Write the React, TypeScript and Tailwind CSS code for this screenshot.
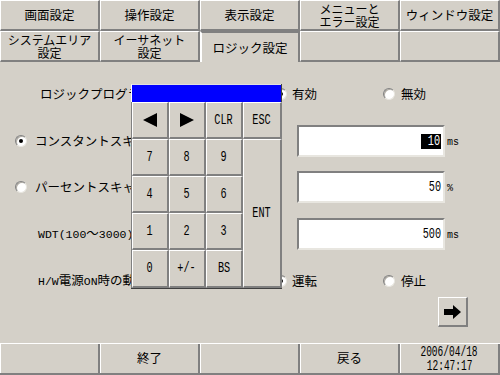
import React from "react";

const JP = "font-['Noto_Sans_CJK_JP',sans-serif]";
const MONO = "font-['Liberation_Mono',monospace]";

function Tab({ children, selected }: { children?: React.ReactNode; selected?: boolean }) {
  return (
    <div
      className={
        "flex items-center justify-center text-center text-[12.5px] leading-[12px] text-black border-l border-l-white border-r-2 border-r-[#808080] " +
        (selected
          ? "border-t-2 border-t-[#808080] border-l-[#808080] border-l-2 bg-[#d4d0c8]"
          : "border-t border-t-white border-b-2 border-b-[#808080]")
      }
    >
      {children}
    </div>
  );
}

function TwoLine({ a, b }: { a: string; b: string }) {
  return (
    <span className="flex flex-col items-center text-[12px]">
      <span className="block h-[13px] leading-[13px]">{a}</span>
      <span className="block h-[13px] leading-[13px]">{b}</span>
    </span>
  );
}

function Radio({ checked }: { checked?: boolean }) {
  return (
    <span className="inline-flex w-[12px] h-[12px] rounded-full bg-white items-center justify-center shrink-0 border border-t-[#808080] border-l-[#808080] border-r-[#e8e6e0] border-b-[#e8e6e0] shadow-[inset_1px_1px_0_#b0aca4]">
      {checked && <span className="w-[4px] h-[4px] rounded-full bg-black" />}
    </span>
  );
}

function Narrow({ children, origin = "origin-center", size = "text-[15px]" }: { children: React.ReactNode; origin?: string; size?: string }) {
  return <span className={`${MONO} ${size} inline-block scale-x-[0.68] ${origin} leading-none`}>{children}</span>;
}

function Key({ children, className = "" }: { children?: React.ReactNode; className?: string }) {
  return (
    <div className={"flex items-center justify-center bg-[#d4d0c8] border-t border-l border-t-white border-l-white border-r-2 border-b-2 border-r-[#808080] border-b-[#808080] " + className}>
      {children}
    </div>
  );
}

function Field({ children }: { children: React.ReactNode }) {
  return (
    <div className="w-[148px] h-[32px] bg-white flex items-center justify-end pr-[2px] border-2 border-t-[#808080] border-l-[#808080] border-r-[#e8e6e0] border-b-[#e8e6e0]">
      {children}
    </div>
  );
}

function Unit({ children }: { children: React.ReactNode }) {
  return <span className={`${MONO} text-[10px] ml-[2px] mt-[2px]`}>{children}</span>;
}

function BottomCell({ children }: { children?: React.ReactNode }) {
  return (
    <div className="flex flex-col items-center justify-center border-l border-l-white border-r-2 border-r-[#808080] text-[12.5px]">
      {children}
    </div>
  );
}

export default function App() {
  return (
    <div className={`${JP} w-[500px] h-[375px] bg-[#d4d0c8] flex flex-col overflow-hidden text-black select-none`}>
      {/* Tabs row 1 */}
      <div className="grid grid-cols-5 h-[31px]">
        <Tab>画面設定</Tab>
        <Tab>操作設定</Tab>
        <Tab>表示設定</Tab>
        <Tab>
          <TwoLine a="メニューと" b="エラー設定" />
        </Tab>
        <Tab>ウィンドウ設定</Tab>
      </div>
      {/* Tabs row 2 */}
      <div className="grid grid-cols-5 h-[31px]">
        <Tab>
          <TwoLine a="システムエリア" b="設定" />
        </Tab>
        <Tab>
          <TwoLine a="イーサネット" b="設定" />
        </Tab>
        <Tab selected>ロジック設定</Tab>
        <Tab />
        <Tab />
      </div>

      {/* Content */}
      <div className="relative flex-1 flex flex-col text-[12.5px]">
        <div className="h-[20px]" />
        {/* Row A */}
        <div className="flex items-center h-[24px]">
          <div className="w-[275px] pl-[40px] whitespace-nowrap overflow-hidden">ロジックプログラム</div>
          <div className="w-[108px] flex items-center gap-[5px]">
            <Radio checked />
            <span>有効</span>
          </div>
          <div className="flex items-center gap-[6px]">
            <Radio />
            <span>無効</span>
          </div>
        </div>
        {/* Row B */}
        <div className="flex items-center h-[32px] mt-[19px]">
          <div className="w-[297px] pl-[15px] flex items-center gap-[8px] whitespace-nowrap overflow-hidden">
            <Radio checked />
            <span>コンスタントスキャン</span>
          </div>
          <Field>
            <span className="bg-black text-white px-[1px] leading-none">
              <Narrow origin="origin-right">10</Narrow>
            </span>
          </Field>
          <Unit>ms</Unit>
        </div>
        {/* Row C */}
        <div className="flex items-center h-[32px] mt-[14px]">
          <div className="w-[297px] pl-[15px] flex items-center gap-[8px] whitespace-nowrap overflow-hidden">
            <Radio />
            <span>パーセントスキャン</span>
          </div>
          <Field>
            <Narrow origin="origin-right">50</Narrow>
          </Field>
          <Unit>%</Unit>
        </div>
        {/* Row D */}
        <div className="flex items-center h-[32px] mt-[15px]">
          <div className="w-[297px] pl-[38px] whitespace-nowrap overflow-hidden">
            <span className={`${MONO} text-[11.5px]`}>WDT(100</span>
            <span>～</span>
            <span className={`${MONO} text-[11.5px]`}>3000)</span>
          </div>
          <Field>
            <Narrow origin="origin-right">500</Narrow>
          </Field>
          <Unit>ms</Unit>
        </div>
        {/* Row E */}
        <div className="flex items-center h-[24px] mt-[19px]">
          <div className="w-[275px] pl-[38px] whitespace-nowrap overflow-hidden">
            <span className={`${MONO} text-[11.5px]`}>H/W</span>
            <span>電源</span>
            <span className={`${MONO} text-[11.5px]`}>ON</span>
            <span>時の動作</span>
          </div>
          <div className="w-[108px] flex items-center gap-[5px]">
            <Radio checked />
            <span>運転</span>
          </div>
          <div className="flex items-center gap-[6px]">
            <Radio />
            <span>停止</span>
          </div>
        </div>
        {/* Row F */}
        <div className="flex h-[30px] mt-[4px] pl-[438px]">
          <div className="w-[30px] h-[30px] flex items-center justify-center border-t border-l border-t-white border-l-white border-r-2 border-b-2 border-r-[#808080] border-b-[#808080]">
            <svg width="18" height="14" viewBox="0 0 18 14">
              <polygon points="0,4 9,4 9,0 17,7 9,14 9,10 0,10" fill="#000" />
            </svg>
          </div>
        </div>

        {/* Keypad overlay */}
        <div className="absolute left-[131px] top-[22px] w-[151px] flex flex-col border-r border-b border-r-[#404040] border-b-[#404040] bg-[#d4d0c8]">
          <div className="h-[18px] bg-[#0000ff] border-l border-t border-l-white border-t-[#e0e0e0]" />
          <div className="grid grid-cols-[37px_37px_37px_39px] grid-rows-[37px_37px_37px_37px_38px] border-l border-l-[#808080]">
            <Key>
              <svg width="16" height="16" viewBox="0 0 16 16">
                <polygon points="15,1 15,15 1,8" fill="#000" />
              </svg>
            </Key>
            <Key>
              <svg width="16" height="16" viewBox="0 0 16 16">
                <polygon points="1,1 1,15 15,8" fill="#000" />
              </svg>
            </Key>
            <Key><Narrow>CLR</Narrow></Key>
            <Key><Narrow>ESC</Narrow></Key>
            <Key><Narrow>7</Narrow></Key>
            <Key><Narrow>8</Narrow></Key>
            <Key><Narrow>9</Narrow></Key>
            <Key className="col-start-4 row-start-2 row-span-4"><Narrow>ENT</Narrow></Key>
            <Key><Narrow>4</Narrow></Key>
            <Key><Narrow>5</Narrow></Key>
            <Key><Narrow>6</Narrow></Key>
            <Key><Narrow>1</Narrow></Key>
            <Key><Narrow>2</Narrow></Key>
            <Key><Narrow>3</Narrow></Key>
            <Key><Narrow>0</Narrow></Key>
            <Key><Narrow>+/-</Narrow></Key>
            <Key><Narrow>BS</Narrow></Key>
          </div>
        </div>
      </div>

      {/* Bottom bar */}
      <div className="grid grid-cols-5 h-[32px] border-t border-t-white border-b-2 border-b-[#808080]">
        <BottomCell />
        <BottomCell>終了</BottomCell>
        <BottomCell />
        <BottomCell>戻る</BottomCell>
        <BottomCell>
          <Narrow size="text-[14px]">2006/04/18</Narrow>
          <Narrow size="text-[14px]">12:47:17</Narrow>
        </BottomCell>
      </div>
    </div>
  );
}
